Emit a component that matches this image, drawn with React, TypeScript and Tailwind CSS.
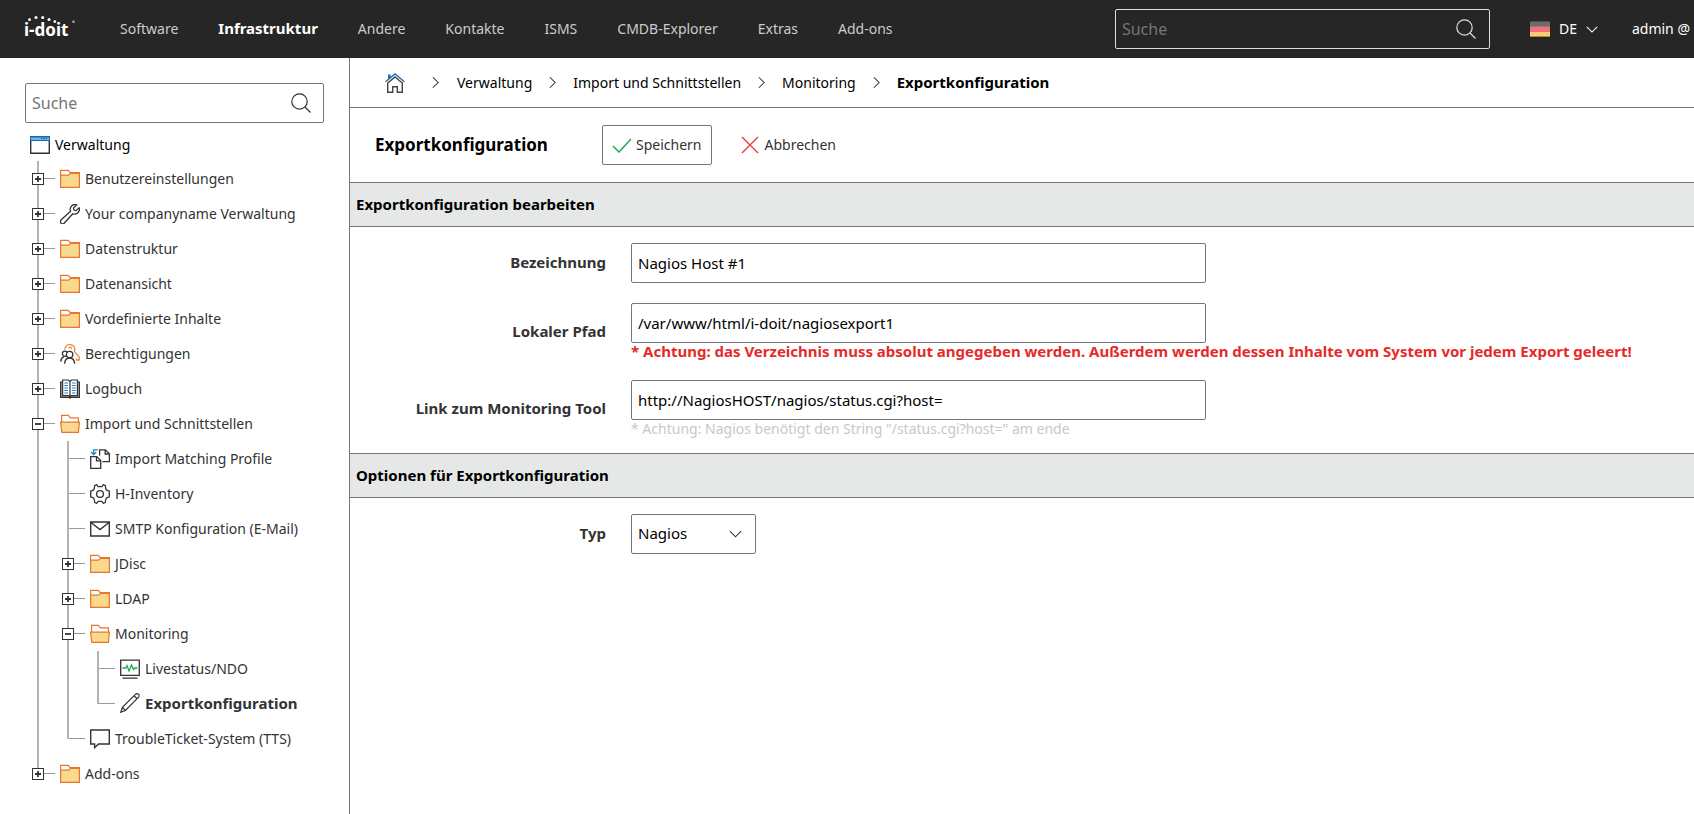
import { useState, type ReactNode } from "react";

type IconName =
  | "folder"
  | "open"
  | "wrench"
  | "rights"
  | "book"
  | "import"
  | "gear"
  | "mail"
  | "monitor"
  | "pencil"
  | "ticket";

interface TreeNode {
  label: string;
  icon: IconName;
  toggle?: "+" | "-";
  active?: boolean;
  children?: TreeNode[];
}

const navItems = [
  "Software",
  "Infrastruktur",
  "Andere",
  "Kontakte",
  "ISMS",
  "CMDB-Explorer",
  "Extras",
  "Add-ons",
];

const tree: TreeNode[] = [
  { label: "Benutzereinstellungen", icon: "folder", toggle: "+" },
  { label: "Your companyname Verwaltung", icon: "wrench", toggle: "+" },
  { label: "Datenstruktur", icon: "folder", toggle: "+" },
  { label: "Datenansicht", icon: "folder", toggle: "+" },
  { label: "Vordefinierte Inhalte", icon: "folder", toggle: "+" },
  { label: "Berechtigungen", icon: "rights", toggle: "+" },
  { label: "Logbuch", icon: "book", toggle: "+" },
  {
    label: "Import und Schnittstellen",
    icon: "open",
    toggle: "-",
    children: [
      { label: "Import Matching Profile", icon: "import" },
      { label: "H-Inventory", icon: "gear" },
      { label: "SMTP Konfiguration (E-Mail)", icon: "mail" },
      { label: "JDisc", icon: "folder", toggle: "+" },
      { label: "LDAP", icon: "folder", toggle: "+" },
      {
        label: "Monitoring",
        icon: "open",
        toggle: "-",
        children: [
          { label: "Livestatus/NDO", icon: "monitor" },
          { label: "Exportkonfiguration", icon: "pencil", active: true },
        ],
      },
      { label: "TroubleTicket-System (TTS)", icon: "ticket" },
    ],
  },
  { label: "Add-ons", icon: "folder", toggle: "+" },
];

const iconShapes: Record<IconName, ReactNode> = {
  folder: (
    <g stroke="#e8762d" strokeWidth="1.2">
      <path d="M.6 18.4V1.4h7.600l2 2.200h9.200v14.800z" fill="#fff" />
      <path d="M.6 18.400V6.200h8l2-1.800h8.800v14z" fill="#f8d98e" />
    </g>
  ),
  open: (
    <g stroke="#e8762d" strokeWidth="1.2">
      <path d="M1.600 10V1.400h6.800l2 2.400h8v6" fill="#fff" />
      <path d="M.6 8.200h18.800l-1 10.200H1.800z" fill="#f8d98e" />
    </g>
  ),
  wrench: (
    <path
      d="M16.800.9a4.800 4.800 0 0 0-6.200 6.300L1.400 15.600a2.300 2.300 0 1 0 3.200 3.200l8.200-9a4.900 4.900 0 0 0 6.300-6.200l-3 3-2.100-.5-.5-2.100z"
      stroke="#333"
      strokeWidth="1.300"
      strokeLinejoin="round"
    />
  ),
  rights: (
    <g strokeWidth="1.300">
      <path
        d="M4.800 5.600A5 5 0 1 1 14.400 7.400l5 6-.2 2.600h-2.600l-.6-1.600M8.800 4.200a1.300 1.300 0 1 1 2.400.8"
        stroke="#f0893c"
      />
      <circle cx="5" cy="9.800" r="2.600" stroke="#333" />
      <circle cx="9.600" cy="10.600" r="3.200" stroke="#333" fill="#fff" />
      <path d="M.7 17.600c.2-2.600 1.200-4.200 3.300-5M4.600 19.800c.2-3.600 2-5.800 5-5.800s4.800 2.200 5 5.800" stroke="#333" />
    </g>
  ),
  book: (
    <g stroke="#333" strokeWidth="1.200">
      <path d="M.6 3h18.800v15.400H11l-1 .8-1-.8H.6z" fill="#aaa" />
      <path d="M2.600 1h5.800L10 2.400 11.600 1h5.800v15.600h-5.800L10 18l-1.600-1.400H2.600zM10 2.400V18" fill="#fff" />
      <path
        d="M4.400 4H8M4.400 6.500H8M4.400 9H8M4.400 11.500H8M4.400 14H8M12 4h3.600M12 6.500h3.600M12 9h3.600M12 11.500h3.600M12 14h3.600"
        stroke="#1f83c9"
      />
    </g>
  ),
  import: (
    <g stroke="#333" strokeWidth="1.300">
      <path d="M9.600 6.500V.8h5.800l4 4v7.800h-7" />
      <path d="M15.200.8v4.200h4.200" />
      <path d="M.7 7.600h6l4 4v7.800H.7z" />
      <path d="M6.500 7.600v4.200h4.200" />
      <path d="M7.800.9H3.600v4M1 3l2.600 2.600L6.200 3" stroke="#1f83c9" />
    </g>
  ),
  gear: (
    <g stroke="#333" strokeWidth="1.300" strokeLinejoin="round">
      <path d="M4.600 1.500 6.600.7l1.500 2h3.800l1.500-2 2 .8.2 2.800 1 1.800 2.700 1v5.800l-2.700 1-1 1.800-.2 2.800-2 .8-1.500-2H8.100l-1.500 2-2-.8-.2-2.800-1-1.800-2.700-1V7.100l2.700-1 1-1.800z" />
      <circle cx="10" cy="10" r="3.400" />
    </g>
  ),
  mail: (
    <path d="M.7 3h18.600v14H.7zM.7 3.200 10 10.500l9.300-7.300" stroke="#333" strokeWidth="1.400" />
  ),
  monitor: (
    <g stroke="#333" strokeWidth="1.300">
      <path d="M.7 1.200h18.600v15.200H.7zM2.500 19.100h15" />
      <path d="M2.500 9h3.200L7 6.500l2 5.500 2.500-6 2 4.500L14.800 9h2.700" stroke="#1faa55" />
    </g>
  ),
  pencil: (
    <path
      d="M.8 19.200l1.600-5L15.400 1.400a1.900 1.900 0 0 1 3.200 2.800L5.400 17.400zM2.400 14.200l3 3.200M14 2.800l3.200 3"
      stroke="#333"
      strokeWidth="1.200"
    />
  ),
  ticket: <path d="M.7 1h18.600v14H8.600l-4 3.600V15H.7z" stroke="#333" strokeWidth="1.400" />,
};

function Chevron({ className }: { className: string }) {
  return (
    <svg viewBox="0 0 8 14" className={className} fill="none" stroke="#333" strokeWidth="1.200">
      <path d="M1 1l6 6-6 6" />
    </svg>
  );
}

function ChevronDown({ className }: { className: string }) {
  return (
    <svg viewBox="0 0 14 8" className={className} fill="none" stroke="currentColor" strokeWidth="1.200">
      <path d="M1 1l6 6 6-6" />
    </svg>
  );
}

function SearchIcon() {
  return (
    <svg viewBox="0 0 20 20" className="size-5 shrink-0" fill="none" stroke="currentColor" strokeWidth="1.200">
      <circle cx="8.500" cy="8.500" r="7.700" />
      <path d="M14 14l5.500 5.500" />
    </svg>
  );
}

function Logo() {
  return (
    <a href="#" aria-label="i-doit" className="relative block w-[51px] shrink-0 text-white">
      <svg viewBox="0 0 51 30" className="h-[30px] w-full overflow-visible" fill="currentColor">
        <circle cx="5.500" cy="5.700" r="1.400" />
        <circle cx="12" cy="3.400" r="1.500" />
        <circle cx="18.700" cy="3.600" r="1.500" />
        <circle cx="25" cy="5.600" r="1.500" />
        <circle cx="30.800" cy="7.600" r="1.400" />
        <circle cx="49.500" cy="7.800" r="1.300" fill="#aaa" />
        <text x="0" y="22" fontSize="17" fontWeight="700" fontFamily="Noto Sans, sans-serif">
          i-doit
        </text>
      </svg>
    </a>
  );
}

function TreeList({ nodes }: { nodes: TreeNode[] }) {
  return (
    <ul>
      {nodes.map((node, i) => {
        const last = i === nodes.length - 1;
        return (
          <li key={node.label} className="relative">
            <span
              className={`absolute left-[7px] top-0 w-[2px] bg-[#b3b3b3] ${last ? "h-[18px]" : "h-full"}`}
            />
            <div className="flex h-[35px] items-center">
              {node.toggle ? (
                <button
                  aria-label={node.label}
                  className="relative ml-[2px] size-3 shrink-0 border border-[#333] bg-white"
                >
                  <svg viewBox="0 0 10 10" className="size-full" stroke="#333" strokeWidth="1.800">
                    <path d={node.toggle === "+" ? "M2 5h6M5 2v6" : "M2 5h6"} />
                  </svg>
                </button>
              ) : (
                <span className="ml-[9px] h-px w-[5px] bg-[#999]" />
              )}
              <span className="h-px w-[11px] bg-[#999]" />
              <a
                href="#"
                className={`ml-[5px] flex items-center gap-[5px] whitespace-nowrap text-[#333] ${
                  node.active ? "text-[15px] font-bold" : "text-sm"
                }`}
              >
                <svg viewBox="0 0 20 20" className="size-5 shrink-0" fill="none">
                  {iconShapes[node.icon]}
                </svg>
                {node.label}
              </a>
            </div>
            {node.children && (
              <div className="ml-[30px]">
                <TreeList nodes={node.children} />
              </div>
            )}
          </li>
        );
      })}
    </ul>
  );
}

function SectionBar({ children }: { children: ReactNode }) {
  return (
    <h2 className="flex h-[45px] items-center border-y border-[#777] bg-[#e5e8e6] px-[6px] text-[15px] font-bold text-black">
      {children}
    </h2>
  );
}

function Field({ id, label, children }: { id: string; label: string; children: ReactNode }) {
  return (
    <div className="flex items-center gap-[25px]">
      <label htmlFor={id} className="w-64 shrink-0 text-right text-[15px] font-bold text-[#333]">
        {label}
      </label>
      <div className="min-w-0 flex-1">{children}</div>
    </div>
  );
}

const inputClass =
  "block h-10 w-full max-w-[575px] rounded-xs border border-[#777] bg-white px-[6px] text-[15px] text-black";

export default function App() {
  const [title, setTitle] = useState("Nagios Host #1");
  const [path, setPath] = useState("/var/www/html/i-doit/nagiosexport1");
  const [link, setLink] = useState("http://NagiosHOST/nagios/status.cgi?host=");

  return (
    <div className="flex min-h-screen flex-col bg-white font-['Noto_Sans',sans-serif] text-sm text-black">
      <header className="flex h-[58px] items-center overflow-hidden bg-[#262626] pl-6 pr-1">
        <Logo />
        <nav className="ml-[45px] flex items-center gap-10">
          {navItems.map((item) => (
            <a
              key={item}
              href="#"
              className={`whitespace-nowrap ${
                item === "Infrastruktur" ? "text-[15px] font-bold text-white" : "text-[#ccc]"
              }`}
            >
              {item}
            </a>
          ))}
        </nav>
        <label className="ml-auto flex h-10 w-[375px] items-center rounded-xs border border-[#ddd] pl-[6px] pr-[13px] text-[#ddd]">
          <input
            aria-label="Suche"
            placeholder="Suche"
            className="min-w-0 flex-1 bg-transparent text-base outline-none placeholder:text-[#757575]"
          />
          <SearchIcon />
        </label>
        <button className="ml-10 flex items-center text-white">
          <svg viewBox="0 0 20 16" className="h-4 w-5">
            <path d="M0 0h20v6H0z" fill="#6b6b6b" />
            <path d="M0 5.500h20v5.500H0z" fill="#f2717a" />
            <path d="M0 11h20v5H0z" fill="#f5cc70" />
            <path d="M0 0h20v1H0z" fill="#4a4a4a" />
            <path d="M0 15h20v1H0z" fill="#b08d3c" />
          </svg>
          <span className="ml-[9px]">DE</span>
          <ChevronDown className="ml-[9px] h-[7px] w-3" />
        </button>
        <a href="#" className="ml-[34px] whitespace-nowrap text-white">
          admin @
        </a>
      </header>

      <div className="flex flex-1">
        <aside className="w-[350px] shrink-0 border-r border-[#777] px-[25px] pt-[25px]">
          <label className="flex h-10 items-center rounded-xs border border-[#777] pl-[6px] pr-3 text-[#333]">
            <input
              aria-label="Suche im Baum"
              placeholder="Suche"
              className="min-w-0 flex-1 bg-transparent text-base outline-none placeholder:text-[#757575]"
            />
            <SearchIcon />
          </label>
          <a href="#" className="ml-[5px] mt-[6px] flex h-8 items-center gap-[5px] text-black">
            <svg viewBox="0 0 20 18" className="h-[18px] w-5" fill="none">
              <path d="M.7.7h18.600v16.600H.7z" stroke="#333" strokeWidth="1.400" />
              <path d="M0 0h20v5H0z" fill="#1b66b0" />
              <path d="M1 1.500h18V4H1z" fill="#6cb8ea" />
              <path d="M11 2.500h6" stroke="#1b4f85" strokeDasharray="1.500 1" />
            </svg>
            Verwaltung
          </a>
          <div className="ml-[5px]">
            <TreeList nodes={tree} />
          </div>
        </aside>

        <main className="min-w-0 flex-1">
          <nav className="flex h-[50px] items-center border-b border-[#777] pl-[35px]">
            <a href="#" aria-label="Startseite">
              <svg viewBox="0 0 20 20" className="size-5" fill="none" strokeWidth="1.400">
                <path d="M2.700 10v9.300h5v-5.600h4.600v5.600h5V10L10 4z" stroke="#444" />
                <path d="M.6 8.800 10 1l9.400 7.800" stroke="#1b6fb8" />
                <path d="M3 6.800V1.500h2.600v3.200z" fill="#1b6fb8" />
              </svg>
            </a>
            <Chevron className="ml-[27px] mr-[18px] h-[13px] w-[7px]" />
            <a href="#">Verwaltung</a>
            <Chevron className="mx-[17px] h-[13px] w-[7px]" />
            <a href="#">Import und Schnittstellen</a>
            <Chevron className="mx-[17px] h-[13px] w-[7px]" />
            <a href="#">Monitoring</a>
            <Chevron className="mx-[17px] h-[13px] w-[7px]" />
            <a href="#" className="text-[15px] font-bold">
              Exportkonfiguration
            </a>
          </nav>

          <div className="flex h-[74px] items-center pl-[25px]">
            <h1 className="w-[227px] text-[17px] font-bold">Exportkonfiguration</h1>
            <button className="flex h-10 items-center gap-1 rounded-xs border border-[#777] px-[9px] text-[#333]">
              <svg viewBox="0 0 20 16" className="h-4 w-5" fill="none" stroke="#1faa55" strokeWidth="1.500">
                <path d="M1 9l6 6L19 2" />
              </svg>
              Speichern
            </button>
            <button className="ml-[29px] flex items-center gap-[6px] text-[#333]">
              <svg viewBox="0 0 18 18" className="size-[18px]" fill="none" stroke="#e53935" strokeWidth="1.300">
                <path d="M1 1l16 16M17 1L1 17" />
              </svg>
              Abbrechen
            </button>
          </div>

          <SectionBar>Exportkonfiguration bearbeiten</SectionBar>
          <div className="space-y-5 py-4">
            <Field id="title" label="Bezeichnung">
              <input id="title" value={title} onChange={(e) => setTitle(e.target.value)} className={inputClass} />
            </Field>
            <Field id="path" label="Lokaler Pfad">
              <input id="path" value={path} onChange={(e) => setPath(e.target.value)} className={inputClass} />
              <p className="whitespace-nowrap text-[15px] leading-[17px] font-bold text-[#e62a2a]">
                * Achtung: das Verzeichnis muss absolut angegeben werden. Außerdem werden dessen Inhalte vom System vor
                jedem Export geleert!
              </p>
            </Field>
            <Field id="link" label="Link zum Monitoring Tool">
              <input id="link" value={link} onChange={(e) => setLink(e.target.value)} className={inputClass} />
              <p className="text-sm leading-[17px] text-[#c8c8c8]">
                * Achtung: Nagios benötigt den String "/status.cgi?host=" am ende
              </p>
            </Field>
          </div>

          <SectionBar>Optionen für Exportkonfiguration</SectionBar>
          <div className="py-4">
            <Field id="type" label="Typ">
              <div className="relative w-[125px]">
                <select
                  id="type"
                  className="h-10 w-full appearance-none rounded-xs border border-[#777] bg-white px-[6px] text-[15px] text-black"
                >
                  <option>Nagios</option>
                </select>
                <ChevronDown className="pointer-events-none absolute right-[14px] top-4 h-2 w-[13px] text-[#333]" />
              </div>
            </Field>
          </div>
        </main>
      </div>
    </div>
  );
}
